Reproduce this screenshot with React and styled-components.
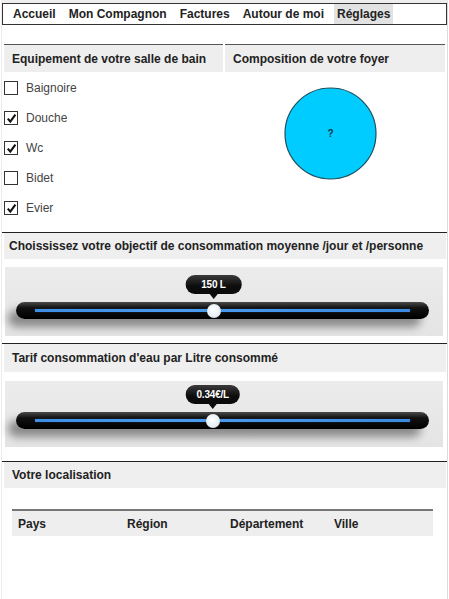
import React from "react";
import styled, { createGlobalStyle } from "styled-components";

const GlobalStyle = createGlobalStyle`
  html, body { margin: 0; padding: 0; background: #ffffff; }
  body { font-family: "Liberation Sans", Arial, sans-serif; color: #222; }
`;

const Page = styled.div`
  width: 445px;
  min-height: 596px;
  margin-left: 1px;
  border-top: 3px solid #eeeeee;
  border-left: 1px solid #ececec;
  border-right: 1px solid #dcdcdc;
  background: #fff;
`;

const Nav = styled.nav`
  display: flex;
  align-items: stretch;
  gap: 7px;
  height: 20px;
  border: 1px solid #333;
  padding-left: 7px;
  box-sizing: content-box;
`;

const NavItem = styled.a`
  display: flex;
  align-items: center;
  padding: 0 3px;
  font-size: 12px;
  font-weight: bold;
  color: #222;
  background: ${(p) => (p.$active ? "#e2e2e2" : "transparent")};
`;

const TopGrid = styled.div`
  display: grid;
  grid-template-columns: 219px 220px;
  column-gap: 2px;
  margin-top: 19px;
  padding-left: 2px;
`;

const ColHeader = styled.div`
  height: 27px;
  border-top: 1px solid #555;
  background: #eeeeee;
  display: flex;
  align-items: center;
  padding-left: ${(p) => p.$indent}px;
  font-size: 12px;
  font-weight: bold;
  color: #222;
`;

const CheckList = styled.ul`
  list-style: none;
  margin: 0;
  padding: 1px 0 0 0;
`;

const CheckRow = styled.li`
  height: 30px;
  display: flex;
  align-items: center;
  gap: 8px;
  font-size: 12px;
  color: #444;
`;

const Box = styled.span`
  width: 12px;
  height: 12px;
  border: 1px solid #333;
  background: #fff;
  display: flex;
  align-items: center;
  justify-content: center;
`;

const CircleWrap = styled.div`
  padding: 15px 0 0 59px;
`;

const Section = styled.section`
  border-top: 1px solid #222;
  margin-top: ${(p) => p.$before || 0}px;
  padding-bottom: ${(p) => p.$after}px;
`;

const SectionHeader = styled.div`
  height: ${(p) => p.$h}px;
  background: #efefef;
  margin: 0 1px 0 2px;
  display: flex;
  align-items: center;
  padding-left: ${(p) => p.$indent}px;
  font-size: 12px;
  font-weight: bold;
  color: #222;
`;

const SliderPanel = styled.div`
  margin: ${(p) => p.$gap}px 4px 0 3px;
  height: ${(p) => p.$h}px;
  box-sizing: border-box;
  padding-top: ${(p) => p.$top}px;
  background: linear-gradient(#ececec, #e4e4e4);
`;

const Track = styled.div`
  position: relative;
  height: 17px;
  margin: 0 14px 0 11px;
  padding: 0 19px;
  border-radius: 9px;
  display: flex;
  align-items: center;
  background: linear-gradient(#4a4a4a 0%, #111 35%, #000 100%);
  box-shadow: -8px 8px 8px rgba(0, 0, 0, 0.4);
`;

const BlueLine = styled.div`
  flex: 1;
  height: 3px;
  background: linear-gradient(90deg, #3b8ee4, #4b9cf0 40%, #3a8be0);
  box-shadow: 0 0 1px rgba(80, 160, 255, 0.6);
`;

const Thumb = styled.div`
  position: absolute;
  top: 50%;
  width: 14px;
  height: 14px;
  border-radius: 50%;
  transform: translate(-50%, -50%);
  background: radial-gradient(circle at 45% 40%, #ffffff, #e6eef6 60%, #b9c8d6);
  box-shadow: 0 0 1px rgba(0, 0, 0, 0.6);
`;

const Bubble = styled.div`
  position: absolute;
  bottom: calc(100% + 8px);
  transform: translateX(-50%);
  height: 19px;
  padding: 0 ${(p) => p.$pad}px;
  border-radius: 9px;
  background: linear-gradient(#3a3a3a, #0c0c0c 60%);
  color: #fff;
  font-size: 10px;
  font-weight: bold;
  display: flex;
  align-items: center;
  white-space: nowrap;
  letter-spacing: -0.2px;
  &::after {
    content: "";
    position: absolute;
    left: 50%;
    top: 100%;
    transform: translateX(-50%);
    border-left: 4px solid transparent;
    border-right: 4px solid transparent;
    border-top: 5px solid #0c0c0c;
  }
`;

const Table = styled.div`
  margin: 21px 14px 0 10px;
  border-top: 2px solid #777;
  background: #eeeeee;
  height: 25px;
  display: grid;
  grid-template-columns: 109px 103px 104px 1fr;
  align-items: center;
`;

const Th = styled.div`
  padding-left: 6px;
  font-size: 12px;
  font-weight: bold;
  color: #222;
`;

function Check({ checked }) {
  return (
    <Box>
      {checked && (
        <svg width="11" height="11" viewBox="0 0 11 11">
          <path d="M1.8 5.6 L4.3 8.6 L9.4 1.6" fill="none" stroke="#111" strokeWidth="2.1" />
        </svg>
      )}
    </Box>
  );
}

function Slider({ value, pct, pad }) {
  const left = `calc(19px + ${pct} * (100% - 38px))`;
  return (
    <Track>
      <BlueLine />
      <Bubble $pad={pad} style={{ left }}>{value}</Bubble>
      <Thumb style={{ left }} />
    </Track>
  );
}

const equip = [
  ["Baignoire", false],
  ["Douche", true],
  ["Wc", true],
  ["Bidet", false],
  ["Evier", true],
];

export default function App() {
  return (
    <>
      <GlobalStyle />
      <Page>
        <Nav>
          <NavItem>Accueil</NavItem>
          <NavItem>Mon Compagnon</NavItem>
          <NavItem>Factures</NavItem>
          <NavItem>Autour de moi</NavItem>
          <NavItem $active>Réglages</NavItem>
        </Nav>

        <TopGrid>
          <div>
            <ColHeader $indent={8}>Equipement de votre salle de bain</ColHeader>
            <CheckList>
              {equip.map(([label, c]) => (
                <CheckRow key={label}>
                  <Check checked={c} />
                  {label}
                </CheckRow>
              ))}
            </CheckList>
          </div>
          <div>
            <ColHeader $indent={8}>Composition de votre foyer</ColHeader>
            <CircleWrap>
              <svg width="93" height="93" viewBox="0 0 93 93">
                <circle cx="46.5" cy="46.5" r="45.5" fill="#00ccff" stroke="#1d4e5c" strokeWidth="1.2" />
                <text x="46.5" y="50" textAnchor="middle" fontSize="10" fontWeight="bold" fill="#1a3440" fontFamily="Liberation Sans, Arial, sans-serif">?</text>
              </svg>
            </CircleWrap>
          </div>
        </TopGrid>

        <Section $before={9} $after={7}>
          <SectionHeader $h={26} $indent={5}>
            Choississez votre objectif de consommation moyenne /jour et /personne
          </SectionHeader>
          <SliderPanel $gap={8} $h={69} $top={35}>
            <Slider value="150 L" pct={0.476} pad={16} />
          </SliderPanel>
        </Section>

        <Section $after={14}>
          <SectionHeader $h={28} $indent={8}>
            Tarif consommation d'eau par Litre consommé
          </SectionHeader>
          <SliderPanel $gap={9} $h={66} $top={31}>
            <Slider value="0.34€/L" pct={0.474} pad={11} />
          </SliderPanel>
        </Section>

        <Section $after={60}>
          <SectionHeader $h={26} $indent={8}>Votre localisation</SectionHeader>
          <Table>
            <Th>Pays</Th>
            <Th>Région</Th>
            <Th>Département</Th>
            <Th>Ville</Th>
          </Table>
        </Section>
      </Page>
    </>
  );
}
